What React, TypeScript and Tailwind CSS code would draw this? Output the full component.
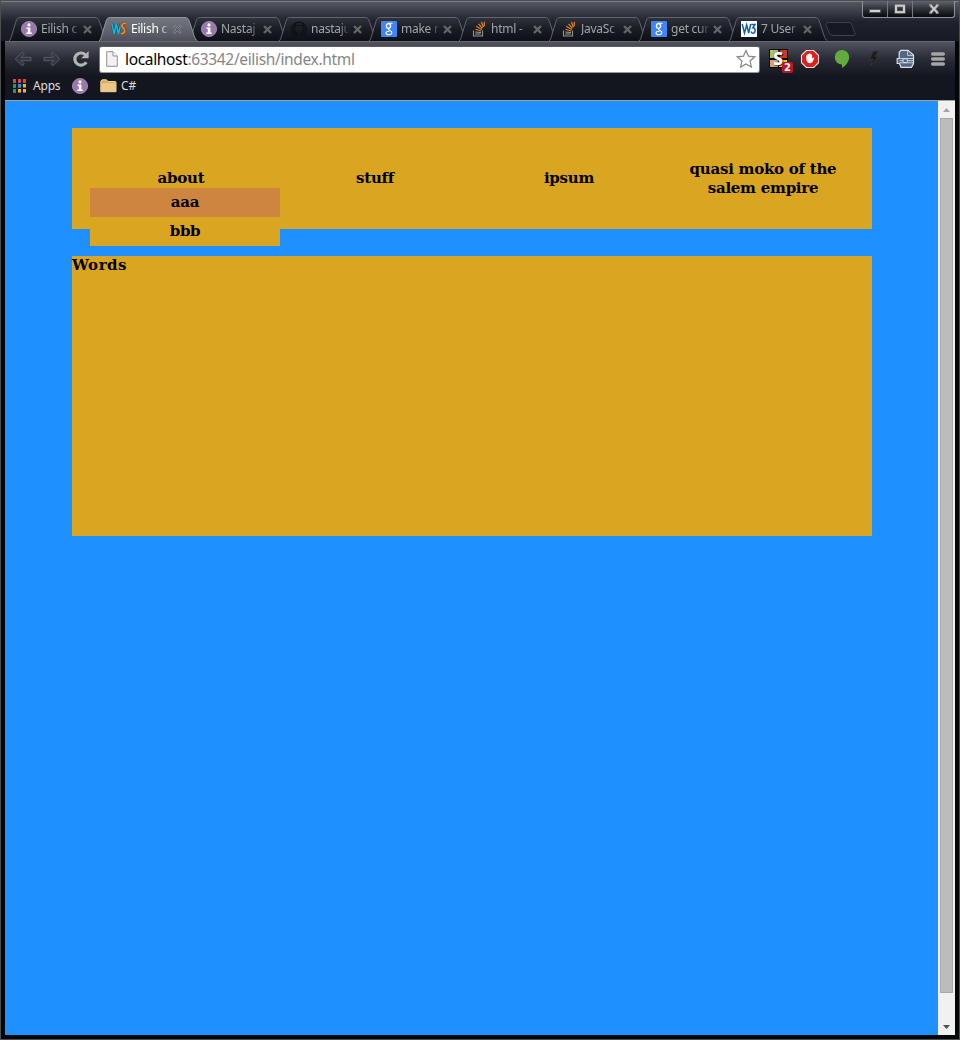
import React from 'react';

type IconKind = 'info' | 'ws' | 'github' | 'google' | 'stack' | 'w3';

const tabs: { icon: IconKind; label: string; active?: boolean }[] = [
  { icon: 'info', label: 'Eilish c' },
  { icon: 'ws', label: 'Eilish c', active: true },
  { icon: 'info', label: 'Nastaj' },
  { icon: 'github', label: 'nastaju' },
  { icon: 'google', label: 'make r' },
  { icon: 'stack', label: 'html -' },
  { icon: 'stack', label: 'JavaSc' },
  { icon: 'google', label: 'get cur' },
  { icon: 'w3', label: '7 User' },
];

function Info() {
  return (
    <svg width="16" height="16" viewBox="0 0 16 16" className="shrink-0">
      <circle cx="8" cy="8" r="7.6" fill="#9a78ae" stroke="#b79fc6" strokeWidth=".7" />
      <circle cx="8" cy="3.9" r="1.6" fill="#fff" />
      <path d="M5.5 6.4H9.4V11.4H10.8V13H5.3V11.4H6.8V7.9H5.5Z" fill="#fff" />
    </svg>
  );
}

function Favicon({ kind }: { kind: IconKind }) {
  if (kind === 'info') return <Info />;
  if (kind === 'google')
    return (
      <div className="flex h-4 w-4 shrink-0 items-center justify-center rounded-[1px] bg-[#4384f4]">
        <svg width="16" height="16" viewBox="0 0 16 16" fill="none" stroke="#fff">
          <ellipse cx="7.5" cy="4.9" rx="2.1" ry="2.4" strokeWidth="1.3" />
          <path d="M8 2.3H11.5M8.2 7.5C6.8 8.5 7.7 9 9.2 9.7C12 11 11.2 13.6 7.9 13.7C4 13.8 3.9 10.3 8.3 10.3" strokeWidth="1.1" />
        </svg>
      </div>
    );
  if (kind === 'w3')
    return (
      <div className="flex h-4 w-4 shrink-0 items-center justify-center bg-white">
        <svg width="16" height="16" viewBox="0 0 16 16" fill="none" stroke="#1262a6" strokeWidth="1.5">
          <path d="M1.2 3L3.5 12L5.7 4L7.7 12L9.7 3" />
          <path d="M10.2 3.4H14L11.8 6.8C15.2 7 14.6 12.2 12 12.2C10.9 12.2 10.4 11.5 10.1 10.5" />
        </svg>
      </div>
    );
  if (kind === 'stack')
    return (
      <svg width="16" height="16" viewBox="0 0 16 16" fill="none" className="shrink-0">
        <path d="M2.5 9.5V15H11.5V9.5" stroke="#969696" strokeWidth="1.1" />
        <path d="M4.2 13H9.8M4.3 11L10 11.5" stroke="#aaa091" strokeWidth="1.1" />
        <path d="M4.5 8.3L10.2 10M5.2 5.2L10.8 8.6M7.6 2.8L11.4 7.4M10.4 1L12.4 6.3M13.4 .8L13.2 5.2" stroke="#e48624" strokeWidth="1.2" />
      </svg>
    );
  if (kind === 'github')
    return (
      <svg width="16" height="16" viewBox="0 0 16 16" fill="none" className="shrink-0">
        <path d="M6 14.8C2.7 14 1 11.4 1 8C1 4 4 1.2 8 1.2C12 1.2 15 4 15 8C15 11.4 13.2 14 10 14.8V11.5C14 11 13.5 7 12 5.5V3.5L10 4.4H6L4 3.5V5.5C2.5 7 2.5 11 6 11.5V14.8M6 13C4.4 13.2 4 12 3 11.3" stroke="#101114" strokeWidth="1.4" />
      </svg>
    );
  return (
    <svg width="16" height="16" viewBox="0 0 16 16" fill="none" className="shrink-0">
      <path d="M.8 2.3L3.2 13L5.3 3L7.5 13L10 2.3" stroke="#07677f" strokeWidth="3" />
      <path d="M.8 2.3L3.2 13L5.3 3L7.5 13L10 2.3" stroke="#2ab0d0" strokeWidth="1.4" />
      <path d="M15 2.5C11 1.6 9.7 4.7 12.2 6.8C14.8 9 14.3 12.7 9.8 12.7" stroke="#9c460c" strokeWidth="3.3" />
      <path d="M15 2.5C11 1.6 9.7 4.7 12.2 6.8C14.8 9 14.3 12.7 9.8 12.7" stroke="#f28b29" strokeWidth="1.6" />
    </svg>
  );
}

function Tab({ icon, label, active }: { icon: IconKind; label: string; active?: boolean }) {
  const id = active ? 'activeTab' : 'idleTab';
  return (
    <div className={`relative flex h-6 w-[90px] shrink-0 items-center pl-3 ${active ? 'z-10' : ''}`}>
      <svg className="absolute top-0 left-0" width="99" height="25" viewBox="0 0 99 25">
        <defs>
          <linearGradient id={id} x1="0" y1="0" x2="0" y2="1">
            <stop offset="0" stopColor={active ? '#737780' : '#30323c'} />
            <stop offset=".45" stopColor={active ? '#646871' : '#1c1e27'} />
            <stop offset="1" stopColor={active ? '#4d505b' : '#0d0f16'} />
          </linearGradient>
        </defs>
        <path d="M0 24C1.5 23 2 21 2.7 18.5L7 4.2C8 1.2 9 .5 11.5 .5H86C88.5 .5 89.4 1.6 90.3 4.2L95 18.5C96 21.5 97 23 98.5 24" fill={`url(#${id})`} stroke={active ? '#92959b' : '#61646b'} />
      </svg>
      <div className="relative flex items-center">
        <Favicon kind={icon} />
        <div className={`ml-1 h-[18px] w-[39px] overflow-hidden whitespace-pre [mask-image:linear-gradient(to_right,black_72%,transparent)] text-[12px] leading-[17px] tracking-[-.25px] ${active ? 'text-white' : 'text-[#a0a6a7]'}`}>{label}</div>
        <svg width="9" height="9" viewBox="0 0 9 9" className="mt-px ml-[3px]">
          <path d="M1 1L8 8M8 1L1 8" stroke={active ? '#969aa0' : '#646668'} strokeWidth="2.4" />
          {active && <path d="M1.3 1.3L7.7 7.7M7.7 1.3L1.3 7.7" stroke="#50545d" strokeWidth="1.2" />}
        </svg>
      </div>
    </div>
  );
}

function WindowButtons() {
  return (
    <div className="flex h-[18px] w-[93px] rounded-b-[3px] border border-t-0 border-[#909297] bg-linear-to-b from-[#686a74] via-[#32343d] to-[#090a0d]">
      <div className="flex w-[25px] items-center justify-center border-r border-[#777981]">
        <svg width="12" height="12" viewBox="0 0 12 12"><rect x=".5" y="6.5" width="11" height="3" fill="#d2d2d2" stroke="#55565a" /></svg>
      </div>
      <div className="flex w-[25px] items-center justify-center border-r border-[#777981]">
        <svg width="12" height="12" viewBox="0 0 12 12" fill="none"><rect x="2" y="2.7" width="8" height="6.4" stroke="#64666b" strokeWidth="3.2" /><rect x="2" y="2.7" width="8" height="6.4" stroke="#c9c9c9" strokeWidth="2" /></svg>
      </div>
      <div className="flex flex-1 items-center justify-center">
        <svg width="12" height="12" viewBox="0 0 12 12"><path d="M2.6 2.4L9.4 9.6M9.4 2.4L2.6 9.6" stroke="#66686e" strokeWidth="3.3" /><path d="M2.6 2.4L9.4 9.6M9.4 2.4L2.6 9.6" stroke="#ccc" strokeWidth="1.8" /><path d="M1 2H4M8 2H11M1 10H4M8 10H11" stroke="#ccc" /></svg>
      </div>
    </div>
  );
}

function Arrow({ flip }: { flip?: boolean }) {
  return (
    <svg width="18" height="16" viewBox="0 0 18 16" className={flip ? '-scale-x-100' : ''}>
      <path d="M8.3 1.2L1.2 8L8.3 14.8L10.2 12.7L7.2 9.7H17V6.3H7.2L10.2 3.3Z" fill="#343740" stroke="#595c65" />
    </svg>
  );
}

function Toolbar() {
  return (
    <div className="flex h-[35px] shrink-0 items-center border-t border-[#656870] bg-linear-to-b from-[#51545f] via-[#292c36] to-[#14171f] pl-[9px]">
      <Arrow />
      <div className="ml-[11px] flex"><Arrow flip /></div>
      <svg width="18" height="18" viewBox="0 0 18 18" className="ml-[11px]">
        <path d="M14.2 12.2A6.1 6.1 0 1 1 13.3 4.8" fill="none" stroke="#b4b4b4" strokeWidth="3.2" />
        <path d="M16.6 1V8.2H9.2Z" fill="#b4b4b4" />
      </svg>
      <div className="ml-[9px] flex h-[27px] w-[661px] items-center rounded-[3px] border border-t-[#5b5d62] border-r-[#777] border-b-[#999] border-l-[#777] bg-white pl-[6px]">
        <svg width="12" height="16" viewBox="0 0 12 16" className="shrink-0">
          <path d="M.7 .7H7L11.3 5V15.3H.7Z" fill="#f1f1f1" stroke="#919191" />
          <path d="M7 .7V5H11.3" fill="#fff" stroke="#919191" />
        </svg>
        <span className="ml-[7px] -mt-px text-[15.5px] leading-[20px] tracking-[-.34px] text-[#868686]"><span className="text-black">localhost</span>:63342/eilish/index.html</span>
        <svg width="20" height="20" viewBox="0 0 20 20" className="mr-[3px] ml-auto">
          <path d="M10 1.5L12.5 7.1L18.7 7.8L14.1 12L15.4 18.1L10 15L4.6 18.1L5.9 12L1.3 7.8L7.5 7.1Z" fill="#fff" stroke="#85878b" strokeWidth="1.2" />
        </svg>
      </div>
      <div className="ml-[8px] flex items-center gap-[12px]">
        <div className="relative flex h-5 w-5">
          <svg width="20" height="20" viewBox="0 0 20 20">
            <rect x="1" y="0" width="19" height="19" fill="#0a0a0a" />
            <path d="M2 1H10V9H2Z" fill="#aec35d" /><path d="M12 1H19V9H12Z" fill="#c23b2d" />
            <path d="M2 11H10V18H2Z" fill="#dca173" /><path d="M11 11H19V18H11Z" fill="#efcf18" />
          </svg>
          <span className="absolute top-[-1px] left-[5px] text-[18px] leading-[20px] font-bold text-white [text-shadow:0_0_1px_#000,0_0_1px_#000,1px_1px_1px_#000] [-webkit-text-stroke:.5px_white]">S</span>
          <span className="absolute top-[13px] left-[14px] h-[11px] w-[11px] rounded-[2px] bg-[#be1524] text-center font-['DejaVu_Sans'] text-[10px] leading-[11px] font-bold text-white">2</span>
        </div>
        <svg width="20" height="20" viewBox="0 0 20 20">
          <path d="M6.3 1.5H13.7L18.5 6.3V13.7L13.7 18.5H6.3L1.5 13.7V6.3Z" fill="#db2020" stroke="#f3dddd" strokeWidth="1.1" />
          <path d="M6.2 9V6.4Q6.9 5.4 7.5 6.4V5.2Q8.3 4.2 9 5.2V4.7Q10 3.8 10.6 4.8V5.5Q11.9 4.7 12.1 6.2V9.8L13.2 8.6Q14.6 8.2 14.2 9.4L12.2 13.3Q9.8 15 7.7 13.4Q6.2 12 6.2 9Z" fill="#fff" />
        </svg>
        <svg width="20" height="20" viewBox="0 0 20 20"><path d="M10 1A7.2 7.2 0 0 0 10 15.5V19C14 17 17.2 12 17.2 8A7.1 7.1 0 0 0 10 1Z" fill="#62ac3e" /></svg>
        <svg width="20" height="20" viewBox="0 0 20 20"><path d="M9 2.5L14.5 1.8L11.2 7.5H14.5L5.8 17.5L9 10.5H5.5Z" fill="#1c1c1f" stroke="#36383d" strokeWidth=".7" /></svg>
        <svg width="20" height="20" viewBox="0 0 20 20">
          <path d="M5 1.3H12L17.5 6V14.5L15.5 18.3H5L3.5 14.5H1.2V9.5H3.2V3.3Z" fill="#536880" stroke="#d9e0e8" strokeWidth="1.2" />
          <path d="M11.6 1.7V6.4H17.2M3.5 9.5H17.5M3.5 13.8H17.5M9 9.5V14M3.5 11.7H7M11.4 11.7H18" fill="none" stroke="#ccd6e0" strokeWidth=".9" />
          <rect x="7" y="9.8" width="4.4" height="3.8" rx="1" fill="#536880" stroke="#e0e4e9" />
        </svg>
        <svg width="20" height="20" viewBox="0 0 20 20"><path d="M4.7 5H15.3M4.7 10H15.3M4.7 15H15.3" stroke="#a5a5a5" strokeWidth="3.5" strokeLinecap="round" /></svg>
      </div>
    </div>
  );
}

const appColors = ['bg-[#ed4032]', 'bg-[#ed4032]', 'bg-[#ed4032]', 'bg-[#17a463]', 'bg-[#2493e8]', 'bg-[#f5b315]', 'bg-[#17a463]', 'bg-[#f5b315]', 'bg-[#f5b315]'];

function Bookmarks() {
  return (
    <div className="flex h-[24px] shrink-0 items-center bg-[#13161e] pb-[5px] pl-[8px] text-[12px] text-[#dedede]">
      <div className="grid grid-cols-3 gap-x-[2px] gap-y-[1px]">
        {appColors.map((color, i) => <span key={i} className={`box-content h-[3px] w-[3px] border-b border-[#746863] ${color}`} />)}
      </div>
      <span className="ml-[7px] w-[39px] tracking-[-.2px]">Apps</span>
      <Info />
      <svg width="17" height="14" viewBox="0 0 17 14" className="ml-[12px]">
        <path d="M.8 2.2L2 .8H6.5L8 2.5H15Q16 2.5 16 3.5V12.7H.8Z" fill="#dbac62" stroke="#f3d59b" />
        <path d="M1.5 4.2H15.5V12H1.5Z" fill="#ecc785" />
      </svg>
      <span className="ml-[4px]">C#</span>
    </div>
  );
}

function WebPage() {
  return (
    <div className="min-w-0 flex-1 bg-[#1e90ff] pt-[27px] pl-[67px] font-['DejaVu_Serif'] text-[15px] leading-[19px] font-bold tracking-[-.25px] text-black">
      <nav className="flex h-[101px] w-[800px] items-center justify-center bg-[#daa520] text-center">
        <div className="relative w-[194px]">
          about
          <div className="absolute top-[19px] left-[6px] w-[190px] leading-[29px]">
            <div className="h-[29px] bg-[#cd853f]">aaa</div>
            <div className="h-[29px] bg-[#daa520]">bbb</div>
          </div>
        </div>
        <div className="w-[194px]">stuff</div>
        <div className="w-[194px]">ipsum</div>
        <div className="w-[194px] whitespace-nowrap">quasi moko of the<br />salem empire</div>
      </nav>
      <main className="mt-[27px] h-[280px] w-[800px] bg-[#daa520] tracking-[.5px]">Words</main>
    </div>
  );
}

export default function App() {
  return (
    <div className="flex h-[1040px] w-[960px] flex-col overflow-hidden border border-[#4c4d51] bg-[#050608] px-1 pb-1 font-['Noto_Sans',sans-serif]">
      <header className="-mx-1 flex h-10 shrink-0 flex-col border-t border-[#7c7d82] bg-linear-to-b from-[#555762] via-[#20222d] to-[#171a22] pl-1">
        <div className="flex h-[15px] justify-end pr-[4px]"><div className="-mt-[2px]"><WindowButtons /></div></div>
        <div className="flex h-6 pl-[4px]">
          {tabs.map((tab, i) => <Tab key={i} {...tab} />)}
          <svg width="31" height="16" viewBox="0 0 31 16" className="mt-[5px] ml-[6px]">
            <path d="M4 .5H24Q26 .5 27 3L30 11.5Q31 13.5 28 13.5H8Q5 13.5 4.2 11L.8 2.5Q.2 .5 4 .5Z" fill="#171922" stroke="#40424b" />
          </svg>
        </div>
      </header>
      <Toolbar />
      <Bookmarks />
      <div className="flex min-h-0 flex-1 border-t border-[#a0a1a4]">
        <WebPage />
        <div className="flex w-[17px] shrink-0 flex-col items-center bg-[#f1f1f1]">
          <div className="flex h-[17px] items-center"><svg width="7" height="4" viewBox="0 0 7 4"><path d="M0 4L3.5 0L7 4Z" fill="#a4a4a4" /></svg></div>
          <div className="h-[875px] w-[13px] border border-[#a8a8a8] bg-[#bcbcbc]" />
          <div className="mt-auto flex h-[17px] items-center"><svg width="7" height="4" viewBox="0 0 7 4"><path d="M0 0L3.5 4L7 0Z" fill="#505050" /></svg></div>
        </div>
      </div>
    </div>
  );
}
